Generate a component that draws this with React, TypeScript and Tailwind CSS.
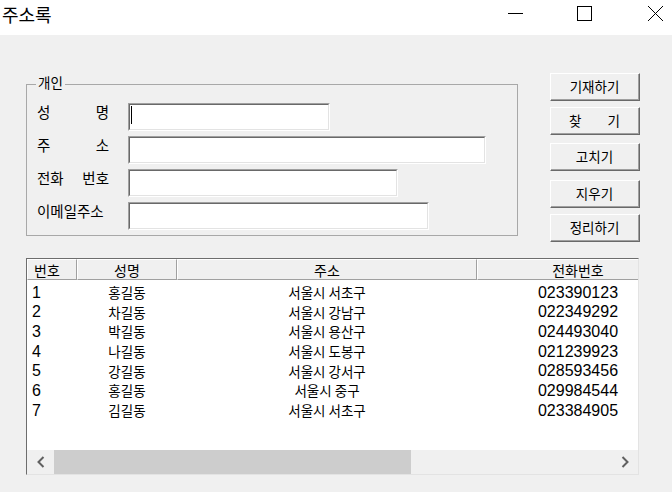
const rows: [string, string, string, string][] = [
  ["1", "홍길동", "서울시 서초구", "023390123"],
  ["2", "차길동", "서울시 강남구", "022349292"],
  ["3", "박길동", "서울시 용산구", "024493040"],
  ["4", "나길동", "서울시 도봉구", "021239923"],
  ["5", "강길동", "서울시 강서구", "028593456"],
  ["6", "홍길동", "서울시 중구", "029984544"],
  ["7", "김길동", "서울시 서초구", "023384905"],
];

function Sunken({ w, caret }: { w: string; caret?: boolean }) {
  return (
    <div className={`${w} h-[28px] border-t border-l border-[#a0a0a0] border-r-white border-b-white border-r border-b`}>
      <div className="w-full h-full bg-white border-t border-l border-[#696969] border-r border-b border-r-[#e3e3e3] border-b-[#e3e3e3] flex items-start">
        {caret && <div className="ml-[1px] mt-[1px] w-[1px] h-[18px] bg-black" />}
      </div>
    </div>
  );
}

function Btn({ children, mt }: { children: React.ReactNode; mt: string }) {
  return (
    <div className={`${mt} w-[90px] h-[28px] border-t border-l border-white border-r border-b border-r-[#696969] border-b-[#696969]`}>
      <div className="w-full h-full bg-[#f0f0f0] border-r border-b border-[#a0a0a0] border-t-0 border-l-0 flex items-center justify-center text-[13.5px] leading-none text-black">
        {children}
      </div>
    </div>
  );
}

function Label({ parts }: { parts: string[] }) {
  return (
    <div className="w-[72px] mt-[2px] flex justify-between text-[14.5px] leading-none text-black">
      {parts.map((p, i) => (
        <span key={i}>{p}</span>
      ))}
    </div>
  );
}

export default function App() {
  return (
    <div className="w-[672px] h-[492px] bg-[#f0f0f0] flex flex-col overflow-hidden font-['Noto_Sans_CJK_KR',sans-serif] text-black">
      {/* Title bar */}
      <div className="h-[35px] bg-white flex items-start shrink-0">
        <div className="ml-[2px] mt-[5px] text-[18px] leading-none">주소록</div>
        <div className="ml-auto mt-[6px] mr-[9px] flex items-start">
          <svg width="15" height="15" viewBox="0 0 15 15">
            <line x1="0" y1="7.5" x2="15" y2="7.5" stroke="#000" strokeWidth="1" />
          </svg>
          <svg className="ml-[54px]" width="15" height="15" viewBox="0 0 15 15">
            <rect x="0.5" y="0.5" width="14" height="14" fill="none" stroke="#000" strokeWidth="1" />
          </svg>
          <svg className="ml-[56px]" width="15" height="15" viewBox="0 0 15 15">
            <line x1="0" y1="0" x2="15" y2="15" stroke="#000" strokeWidth="1" />
            <line x1="15" y1="0" x2="0" y2="15" stroke="#000" strokeWidth="1" />
          </svg>
        </div>
      </div>

      {/* Body */}
      <div className="flex-1 pl-[26px] flex flex-col">
        <div className="flex items-start">
          {/* Group box */}
          <div className="relative w-[492px] h-[152px] mt-[49px] border border-[#a8a8a8]">
            <span className="absolute left-[9px] top-[-9px] px-[2px] bg-[#f0f0f0] text-[13.5px] leading-none">개인</span>
            <div className="pt-[18px] pl-[10px] flex flex-col gap-[5px]">
              <div className="flex items-start">
                <Label parts={["성", "명"]} />
                <div className="ml-[19px]">
                  <Sunken w="w-[202px]" caret />
                </div>
              </div>
              <div className="flex items-start">
                <Label parts={["주", "소"]} />
                <div className="ml-[19px]">
                  <Sunken w="w-[358px]" />
                </div>
              </div>
              <div className="flex items-start">
                <Label parts={["전화", "번호"]} />
                <div className="ml-[19px]">
                  <Sunken w="w-[270px]" />
                </div>
              </div>
              <div className="flex items-start">
                <Label parts={["이메일주소"]} />
                <div className="ml-[19px]">
                  <Sunken w="w-[301px]" />
                </div>
              </div>
            </div>
          </div>

          {/* Buttons */}
          <div className="ml-[32px] mt-[38px] flex flex-col">
            <Btn mt="mt-0">기재하기</Btn>
            <Btn mt="mt-[6px]">
              <div className="w-full px-[18px] flex justify-between">
                <span>찾</span>
                <span>기</span>
              </div>
            </Btn>
            <Btn mt="mt-[8px]">고치기</Btn>
            <Btn mt="mt-[9px]">지우기</Btn>
            <Btn mt="mt-[6px]">정리하기</Btn>
          </div>
        </div>

        {/* List view */}
        <div className="mt-[16px] w-[613px] h-[217px] border-t border-l border-[#6d6d6d] border-r border-b border-r-[#e3e3e3] border-b-[#e3e3e3] bg-white flex flex-col">
          <div className="flex-1 overflow-hidden">
            <div className="w-[652px]">
              {/* Header */}
              <div className="h-[21px] flex bg-[#f0f0f0] text-[14px] leading-none">
                <div className="w-[50px] border-r border-b border-[#a0a0a0] border-t border-l border-t-white border-l-white flex items-center pl-[6px]">번호</div>
                <div className="w-[100px] border-r border-b border-[#a0a0a0] border-t border-l border-t-white border-l-white flex items-center justify-center">성명</div>
                <div className="w-[300px] border-r border-b border-[#a0a0a0] border-t border-l border-t-white border-l-white flex items-center justify-center">주소</div>
                <div className="w-[202px] border-r border-b border-[#a0a0a0] border-t border-l border-t-white border-l-white flex items-center justify-center">전화번호</div>
              </div>
              {/* Rows */}
              <div className="pt-[3px]">
                {rows.map((r) => (
                  <div key={r[0]} className="h-[19.67px] flex items-center leading-none">
                    <div className="w-[50px] pl-[5px] font-['Liberation_Sans',sans-serif] text-[16px]">{r[0]}</div>
                    <div className="w-[100px] text-center text-[13.5px]">{r[1]}</div>
                    <div className="w-[300px] text-center text-[13.5px]">{r[2]}</div>
                    <div className="w-[202px] text-center font-['Liberation_Sans',sans-serif] text-[16px]">{r[3]}</div>
                  </div>
                ))}
              </div>
            </div>
          </div>
          {/* Horizontal scrollbar */}
          <div className="h-[24px] flex bg-[#f0f0f0] shrink-0">
            <div className="w-[27px] flex items-center justify-center">
              <svg width="8" height="12" viewBox="0 0 8 12">
                <polyline points="6.5,1 1.5,6 6.5,11" fill="none" stroke="#606060" strokeWidth="2" />
              </svg>
            </div>
            <div className="w-[357px] bg-[#cdcdcd]" />
            <div className="flex-1" />
            <div className="w-[27px] flex items-center justify-center">
              <svg width="8" height="12" viewBox="0 0 8 12">
                <polyline points="1.5,1 6.5,6 1.5,11" fill="none" stroke="#606060" strokeWidth="2" />
              </svg>
            </div>
          </div>
        </div>
      </div>
    </div>
  );
}
